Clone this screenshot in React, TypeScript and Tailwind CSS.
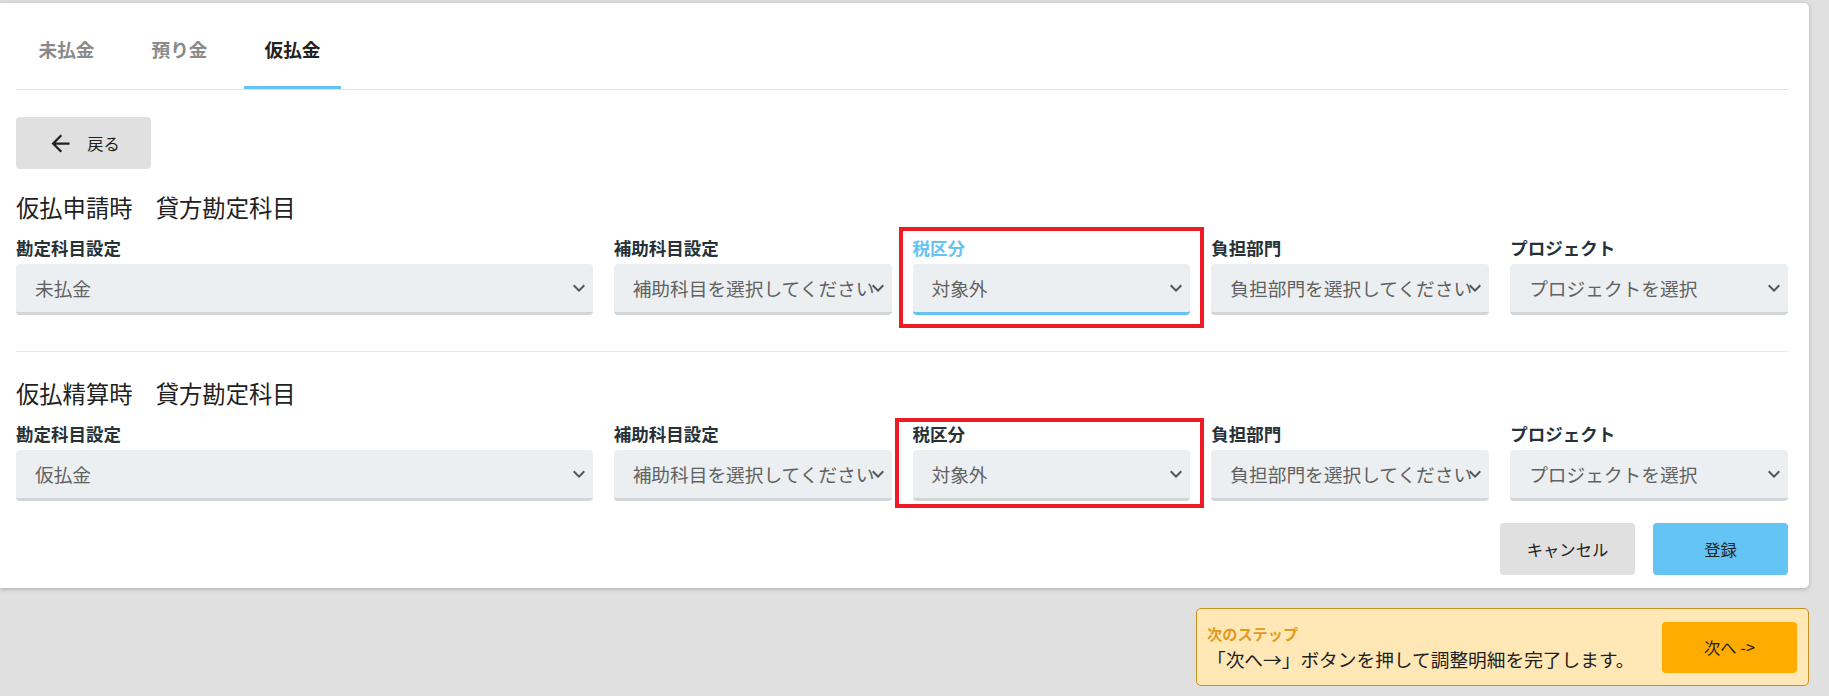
import React from 'react';

type Field = { label: string; value: string; focused?: boolean; wide?: boolean };

const rows: { title: string; fields: Field[] }[] = [
  {
    title: '仮払申請時　貸方勘定科目',
    fields: [
      { label: '勘定科目設定', value: '未払金', wide: true },
      { label: '補助科目設定', value: '補助科目を選択してください' },
      { label: '税区分', value: '対象外', focused: true },
      { label: '負担部門', value: '負担部門を選択してください' },
      { label: 'プロジェクト', value: 'プロジェクトを選択' },
    ],
  },
  {
    title: '仮払精算時　貸方勘定科目',
    fields: [
      { label: '勘定科目設定', value: '仮払金', wide: true },
      { label: '補助科目設定', value: '補助科目を選択してください' },
      { label: '税区分', value: '対象外' },
      { label: '負担部門', value: '負担部門を選択してください' },
      { label: 'プロジェクト', value: 'プロジェクトを選択' },
    ],
  },
];

function Chevron() {
  return (
    <svg viewBox="0 0 24 24" className="absolute right-[2px] top-1/2 -translate-y-1/2 w-6 h-6 fill-[#555]">
      <path d="M7.41 8.59L12 13.17l4.59-4.58L18 10l-6 6-6-6 1.41-1.41z" />
    </svg>
  );
}

function SelectBox({ value, focused }: { value: string; focused?: boolean }) {
  return (
    <div
      className={`relative h-[51px] rounded-[4px] bg-[#eceff1] border-b-[3px] ${
        focused ? 'border-[#64c3f2]' : 'border-[#d3d6d8]'
      }`}
    >
      <div className="h-full flex items-center pl-[19px] pr-[24px] overflow-hidden whitespace-nowrap text-[18.7px] text-[#616161]">
        {value}
      </div>
      <Chevron />
    </div>
  );
}

function Section({ title, fields }: { title: string; fields: Field[] }) {
  return (
    <div>
      <h2 className="text-[23.3px] leading-[28px] font-normal text-[#212121]">{title}</h2>
      <div className="grid grid-cols-6 gap-x-[21px] mt-4">
        {fields.map((f) => (
          <div key={f.label} className={f.wide ? 'col-span-2' : ''}>
            <div
              className={`text-[17.5px] leading-[21px] font-bold ${
                f.focused ? 'text-[#64c3f2]' : 'text-[#263238]'
              }`}
            >
              {f.label}
            </div>
            <div className="mt-[6px]">
              <SelectBox value={f.value} focused={f.focused} />
            </div>
          </div>
        ))}
      </div>
    </div>
  );
}

export default function App() {
  const tabs = ['未払金', '預り金', '仮払金'];
  const active = 2;

  return (
    <div className="w-[1829px] h-[696px] bg-[#e0e0e0] pt-[3px] pr-[20px] flex flex-col font-['Noto_Sans_CJK_JP','Noto_Sans',sans-serif] overflow-hidden">
      {/* main card */}
      <div className="relative bg-white rounded-r-[5px] shadow-[0_1px_4px_rgba(0,0,0,0.25)] pl-4 pr-[21px] pb-[13px]">
        {/* tabs */}
        <div className="flex gap-4 pl-[2px] border-b border-[#e4e4e4]">
          {tabs.map((t, i) => (
            <button
              key={t}
              className={`w-[97px] h-[86px] pt-[10px] flex items-center justify-center border-b-[3px] text-[18.7px] font-bold ${
                i === active ? 'border-[#64c3f2] text-[#212121]' : 'border-transparent text-[#8a8a8a]'
              }`}
            >
              {t}
            </button>
          ))}
        </div>

        {/* back */}
        <button className="mt-[27px] w-[135px] h-[52px] rounded-[4px] bg-[#e0e0e0] flex items-center justify-center gap-[13px] text-[16.3px] text-[#212121]">
          <svg viewBox="0 0 24 24" className="w-[27px] h-[27px] fill-[#212121]">
            <path d="M20 11H7.83l5.59-5.59L12 4l-8 8 8 8 1.41-1.41L7.83 13H20v-2z" />
          </svg>
          <span>戻る</span>
        </button>

        <div className="mt-[24px]">
          <Section title={rows[0].title} fields={rows[0].fields} />
        </div>

        <div className="mt-[36px] h-px bg-[#e8e8e8]" />

        <div className="mt-[27px]">
          <Section title={rows[1].title} fields={rows[1].fields} />
        </div>

        <div className="mt-[22px] flex justify-end gap-[18px]">
          <button className="w-[135px] h-[52px] rounded-[4px] bg-[#e0e0e0] text-[16.3px] text-[#212121]">キャンセル</button>
          <button className="w-[135px] h-[52px] rounded-[4px] bg-[#64c4f3] text-[16.3px] text-[#212121]">登録</button>
        </div>

        {/* annotation boxes */}
        <div className="absolute left-[899px] top-[224px] w-[305px] h-[101px] border-4 border-[#ed1c24] pointer-events-none" />
        <div className="absolute left-[895px] top-[415px] w-[309px] h-[90px] border-4 border-[#ed1c24] pointer-events-none" />
      </div>

      {/* next step notice */}
      <div className="self-end mt-[20px] w-[613px] h-[78px] bg-[#ffe8b5] border border-[#c8901c] rounded-[5px] flex items-center justify-between pl-[10px] pr-[11px]">
        <div className="flex flex-col">
          <div className="text-[15.2px] leading-[20px] font-bold text-[#e29a1e]">次のステップ</div>
          <div className="mt-1 text-[18.7px] leading-[24px] text-[#212121] whitespace-nowrap">
            「次へ→」ボタンを押して調整明細を完了します。
          </div>
        </div>
        <button className="w-[135px] h-[51px] rounded-[4px] bg-[#ffab00] text-[16.3px] text-[#212121]">次へ -&gt;</button>
      </div>
    </div>
  );
}
